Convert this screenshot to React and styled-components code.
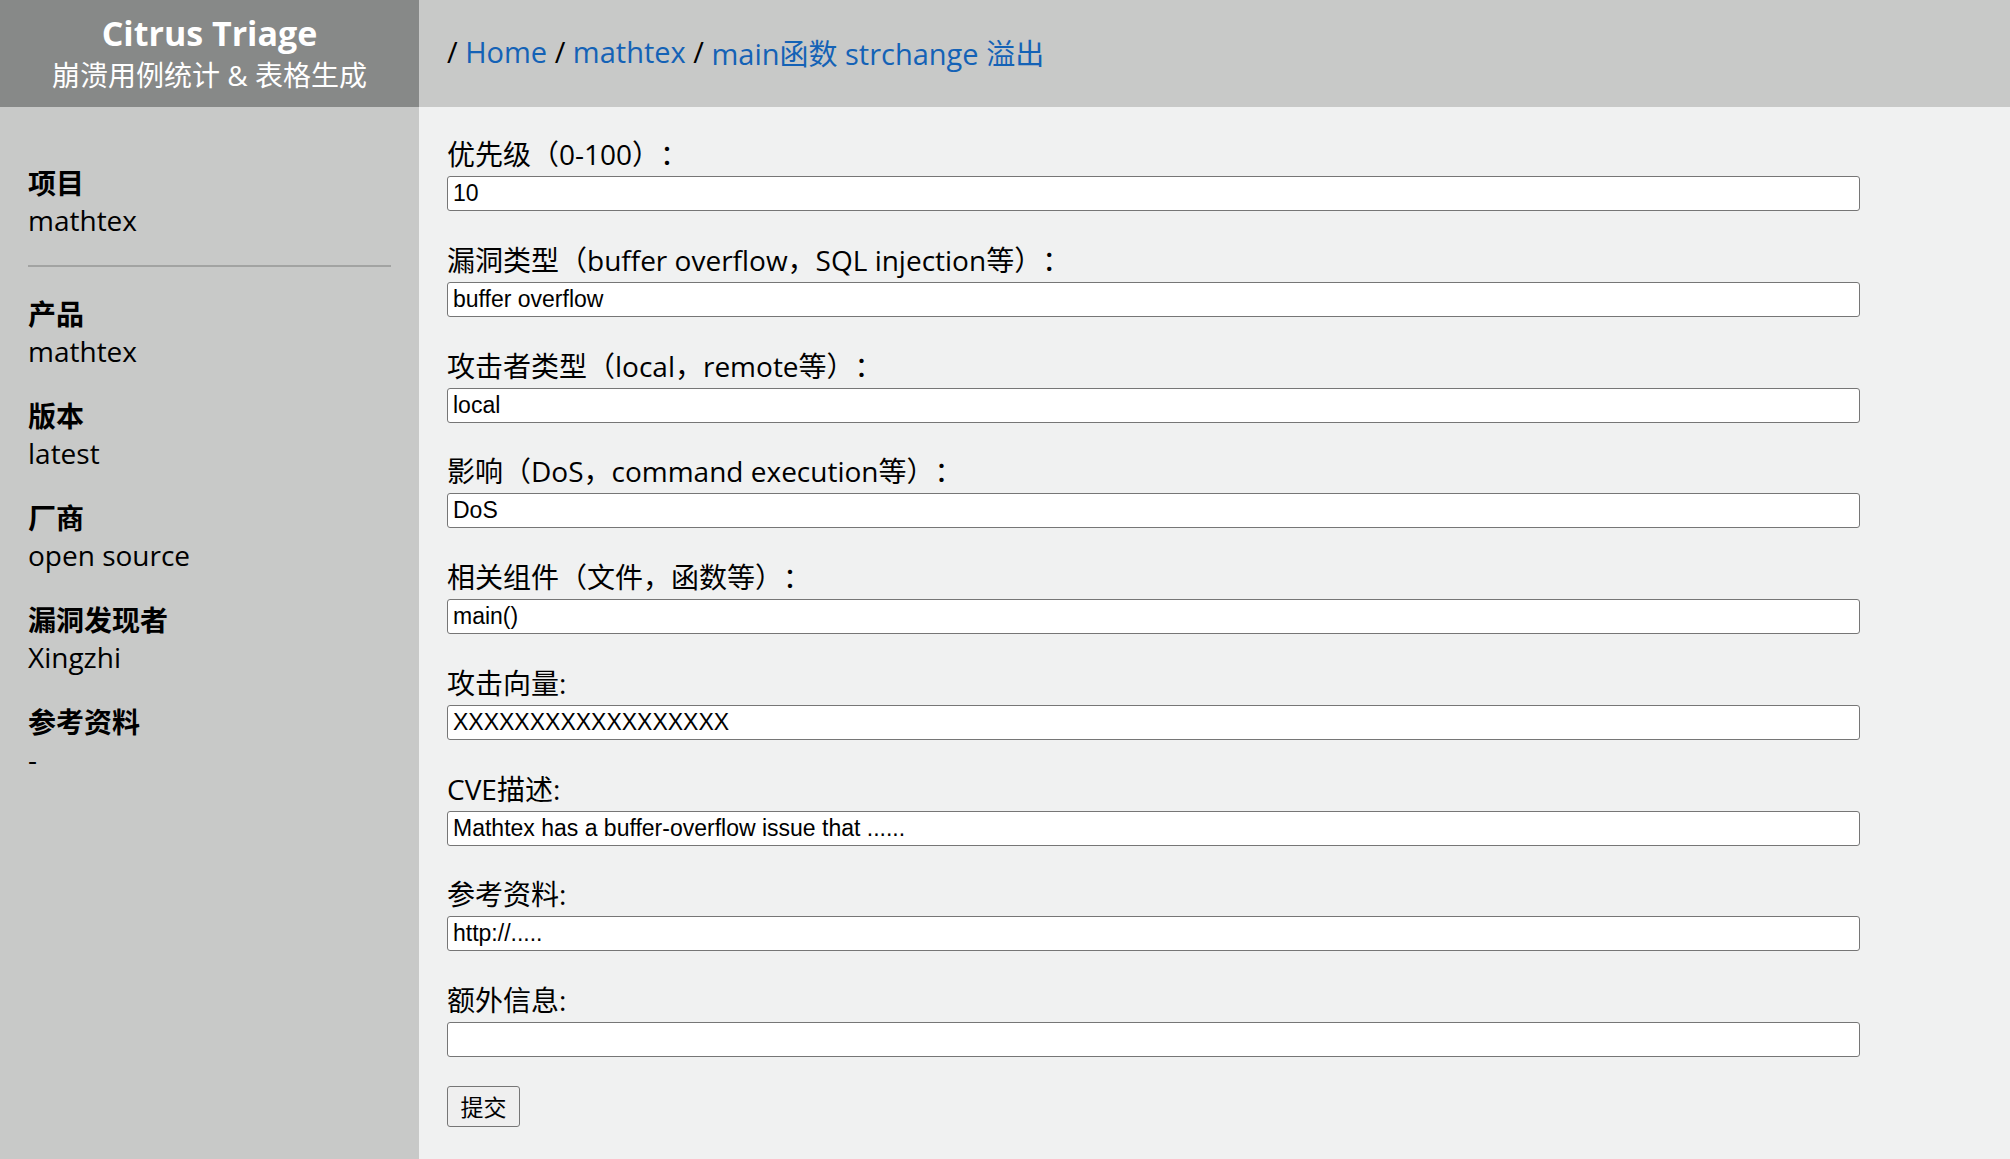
import React from "react";
import styled, { createGlobalStyle } from "styled-components";

const GlobalStyle = createGlobalStyle`
  html, body { margin: 0; padding: 0; }
  body {
    font-family: "Open Sans", "Noto Sans CJK SC", sans-serif;
    color: #000;
    background: #f0f1f1;
    text-spacing-trim: space-all;
  }
  * { box-sizing: border-box; }
`;

const Page = styled.div`
  display: grid;
  grid-template-columns: 419px 1fr;
  grid-template-rows: 107px 1fr;
  min-height: 1159px;
  width: 2010px;
`;

const Brand = styled.div`
  background: #878988;
  color: #fff;
  text-align: center;
  padding-top: 13px;
`;

const BrandTitle = styled.div`
  font-size: 34px;
  font-weight: 700;
  line-height: 40px;
`;

const BrandSub = styled.div`
  font-size: 28px;
  line-height: 37px;
  margin-top: 4px;
`;

const Crumbs = styled.nav`
  background: #c8c9c8;
  display: flex;
  align-items: center;
  padding: 0 0 4px 28px;
  font-size: 29px;
  white-space: pre;
`;

const Sep = styled.span`
  color: #000;
`;

const CrumbLink = styled.a`
  color: #1462b6;
  text-decoration: none;
`;

const Sidebar = styled.aside`
  background: #c8c9c8;
  padding: 58px 28px 28px;
`;

const Info = styled.div`
  margin-bottom: ${(p) => (p.$first ? "26px" : "28px")};
  font-size: 28px;
  line-height: 37px;
`;

const InfoTitle = styled.div`
  font-weight: 700;
`;

const Divider = styled.div`
  height: 2px;
  background: #a2a3a2;
  margin-bottom: 29px;
`;

const Main = styled.main`
  padding: 29px 28px 0;
`;

const Field = styled.div`
  display: flex;
  flex-direction: column;
  margin-bottom: 30.75px;
`;

const Label = styled.label`
  font-size: 28px;
  line-height: 37px;
`;

const Input = styled.input`
  margin-top: 3px;
  width: 1413px;
  height: 35px;
  background: #fff;
  border: 1px solid #767676;
  border-radius: 3px;
  padding: 0 5px;
  font-family: "Liberation Sans", Arial, sans-serif;
  font-size: 23px;
  color: #000;
  outline: none;
`;

const Submit = styled.button`
  margin-top: -2px;
  width: 73px;
  height: 41px;
  background: #efefef;
  border: 1px solid #767676;
  border-radius: 3px;
  font-family: "Noto Sans CJK SC", sans-serif;
  font-size: 23px;
  color: #000;
  padding: 0;
`;

const info = [
  ["产品", "mathtex"],
  ["版本", "latest"],
  ["厂商", "open source"],
  ["漏洞发现者", "Xingzhi"],
  ["参考资料", "-"],
];

const fields = [
  ["优先级（0-100）：", "10"],
  ["漏洞类型（buffer overflow，SQL injection等）：", "buffer overflow"],
  ["攻击者类型（local，remote等）：", "local"],
  ["影响（DoS，command execution等）：", "DoS"],
  ["相关组件（文件，函数等）：", "main()"],
  ["攻击向量:", "XXXXXXXXXXXXXXXXXX"],
  ["CVE描述:", "Mathtex has a buffer-overflow issue that ......"],
  ["参考资料:", "http://....."],
  ["额外信息:", ""],
];

export default function App() {
  return (
    <>
      <GlobalStyle />
      <Page>
        <Brand>
          <BrandTitle>Citrus Triage</BrandTitle>
          <BrandSub>崩溃用例统计 &amp; 表格生成</BrandSub>
        </Brand>
        <Crumbs>
          <Sep>/ </Sep>
          <CrumbLink href="#">Home</CrumbLink>
          <Sep> / </Sep>
          <CrumbLink href="#">mathtex</CrumbLink>
          <Sep> / </Sep>
          <CrumbLink href="#">main函数 strchange 溢出</CrumbLink>
        </Crumbs>
        <Sidebar>
          <Info $first>
            <InfoTitle>项目</InfoTitle>
            <div>mathtex</div>
          </Info>
          <Divider />
          {info.map(([t, v]) => (
            <Info key={t}>
              <InfoTitle>{t}</InfoTitle>
              <div>{v}</div>
            </Info>
          ))}
        </Sidebar>
        <Main>
          {fields.map(([l, v], i) => (
            <Field key={i}>
              <Label htmlFor={`f${i}`}>{l}</Label>
              <Input id={`f${i}`} defaultValue={v} />
            </Field>
          ))}
          <Submit type="button">提交</Submit>
        </Main>
      </Page>
    </>
  );
}
